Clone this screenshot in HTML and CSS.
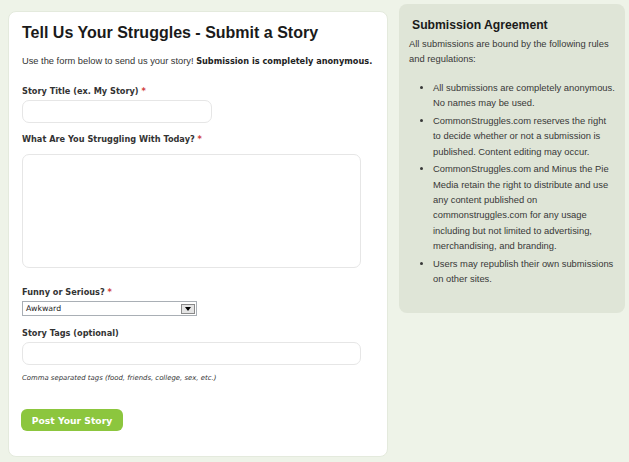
FILE: index.html
```html
<!DOCTYPE html>
<html lang="en">
<head>
  <meta charset="UTF-8" />
  <title>Submit a Story</title>
  <link rel="stylesheet" href="styles.css">
</head>
<body>
  <div class="page">
    <div class="story-form">
      <h1>Tell Us Your Struggles - Submit a Story</h1>
      <p class="intro">Use the form below to send us your story! <b>Submission is completely anonymous.</b></p>

      <form>
        <label for="title" class="first">Story Title (ex. My Story) <span class="req">*</span></label>
        <input type="text" id="title" class="short" />

        <label for="story">What Are You Struggling With Today? <span class="req">*</span></label>
        <textarea id="story"></textarea>

        <label for="tone" class="gap">Funny or Serious? <span class="req">*</span></label>
        <div class="select" id="tone">
          <span>Awkward</span>
          <span class="arrow"></span>
        </div>

        <label for="tags" class="after-select">Story Tags (optional)</label>
        <input type="text" id="tags" />
        <div class="hint">Comma separated tags (food, friends, college, sex, etc.)</div>

        <button type="submit">Post Your Story</button>
      </form>
    </div>

    <div class="agreement">
      <h2>Submission Agreement</h2>
      <p>All submissions are bound by the following rules and regulations:</p>
      <ul>
        <li>All submissions are completely anonymous. No names may be used.</li>
        <li>CommonStruggles.com reserves the right to decide whether or not a submission is published. Content editing may occur.</li>
        <li>CommonStruggles.com and Minus the Pie Media retain the right to distribute and use any content published on commonstruggles.com for any usage including but not limited to advertising, merchandising, and branding.</li>
        <li>Users may republish their own submissions on other sites.</li>
      </ul>
    </div>
  </div>
</body>
</html>
```

FILE: styles.css
```css
body {
  margin: 0;
  background: #eef3e8;
  font-family: "Liberation Sans", Arial, sans-serif;
  color: #333;
}

.page {
  display: flex;
  align-items: flex-start;
  gap: 11px;
  padding: 4px 4px 0 8px;
}

.story-form {
  box-sizing: border-box;
  width: 380px;
  height: 446px;
  margin-top: 7px;
  padding: 11px 13px 0;
  background: #fff;
  border: 1px solid #e4eadd;
  border-radius: 8px;
}

h1 {
  margin: 0;
  font-size: 16px;
  line-height: 20px;
  color: #1a1a1a;
}

.intro {
  margin: 11px 0 0;
  font-size: 9.3px;
  line-height: 14px;
  color: #333;
  white-space: nowrap;
}

.intro b {
  font-family: "DejaVu Sans", Verdana, sans-serif;
  font-size: 8.2px;
  color: #222;
}

form {
  display: flex;
  flex-direction: column;
  align-items: flex-start;
}

label {
  margin-top: 10px;
  font-family: "DejaVu Sans", Verdana, sans-serif;
  font-size: 8.2px;
  line-height: 12px;
  font-weight: bold;
  color: #333;
}

label.first {
  margin-top: 17px;
}

label.gap {
  margin-top: 18px;
}

label.after-select {
  margin-top: 11px;
}

.req {
  color: #d04040;
}

input,
textarea {
  box-sizing: border-box;
  width: 339px;
  height: 23px;
  margin: 3px 0 0;
  border: 1px solid #e6e6e6;
  border-radius: 7px;
  background: #fff;
}

input.short {
  width: 190px;
}

textarea {
  height: 114px;
  margin-top: 9px;
  resize: none;
}

.select {
  box-sizing: border-box;
  display: flex;
  align-items: center;
  justify-content: space-between;
  width: 175px;
  height: 15px;
  margin-top: 3px;
  padding: 0 1px 0 3px;
  border: 1px solid #a9afb5;
  font-family: "DejaVu Sans", Verdana, sans-serif;
  font-size: 7.8px;
  color: #222;
}

.arrow {
  box-sizing: border-box;
  position: relative;
  width: 14px;
  height: 10px;
  background: #e4e4e4;
  border: 1px solid #8a8a8a;
}

.arrow::after {
  content: "";
  position: absolute;
  left: 3px;
  top: 2px;
  border-left: 3px solid transparent;
  border-right: 3px solid transparent;
  border-top: 4px solid #000;
}

.hint {
  margin-top: 8px;
  font-family: "DejaVu Sans", Verdana, sans-serif;
  font-size: 6.9px;
  line-height: 10px;
  font-style: italic;
  color: #333;
}

button {
  margin: 26px 0 0 -1px;
  width: 102px;
  height: 22px;
  padding: 0;
  background: #8cc63e;
  color: #fff;
  border: none;
  border-radius: 6px;
  font-family: "DejaVu Sans", Verdana, sans-serif;
  font-size: 9.2px;
  font-weight: bold;
  cursor: pointer;
}

.agreement {
  box-sizing: border-box;
  width: 226px;
  height: 309px;
  padding: 13px 9px 0 10px;
  background: #dfe5d7;
  border-radius: 8px;
  color: #383838;
}

h2 {
  margin: 0 0 0 3px;
  font-size: 12.2px;
  line-height: 16px;
  color: #1a1a1a;
}

.agreement p {
  margin: 3px 0 0;
  font-size: 9.4px;
  line-height: 15px;
}

.agreement ul {
  margin: 14px 0 0;
  padding-left: 24px;
  font-size: 9.4px;
  line-height: 15.3px;
}

.agreement li {
  margin-bottom: 2.5px;
}
```
